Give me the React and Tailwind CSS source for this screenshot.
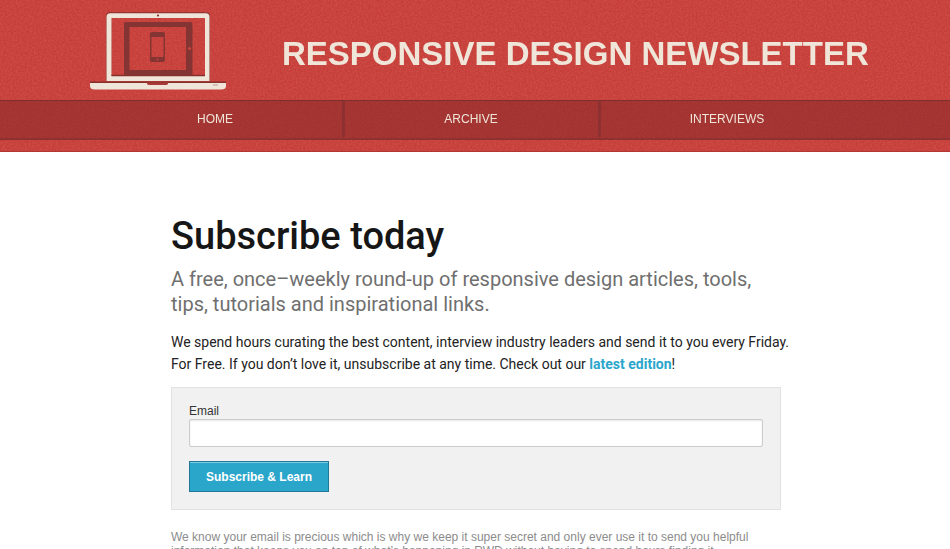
import React from "react";

const navItems = ["Home", "Archive", "Interviews"];

function Grain() {
  return (
    <svg className="pointer-events-none absolute inset-0 h-full w-full opacity-20 mix-blend-overlay" aria-hidden="true">
      <filter id="grain" colorInterpolationFilters="sRGB" x="0" y="0" width="100%" height="100%">
        <feTurbulence type="fractalNoise" baseFrequency="0.55" numOctaves="3" seed="4" />
        <feColorMatrix type="matrix" values="1 0 0 0 0  1 0 0 0 0  1 0 0 0 0  0 0 0 0 1" />
      </filter>
      <rect width="100%" height="100%" filter="url(#grain)" />
    </svg>
  );
}

function DeviceLogo() {
  return (
    <svg viewBox="0 0 136 78" className="h-[78px] w-[136px]" aria-hidden="true">
      <path fillRule="evenodd" d="M16 69V4.500Q16 .3 20.200 .3h95.600q4.200 0 4.200 4.200V69zM21.500 6v57.500h93.500V6z" fill="#85302d" />
      <path fillRule="evenodd" d="M16.500 69V5q0-3.700 3.700-3.700h95.600q3.700 0 3.700 3.700v64zM21.500 6v58h93.500V6z" fill="#efe5d8" />
      <path d="M21.500 62.800h93.500v1.400H21.500z" fill="#85302d" />
      <circle cx="68" cy="3.500" r="1.100" fill="#85302d" />
      <path fillRule="evenodd" d="M35.500 10h65.500q1.500 0 1.500 1.500V63H34V11.500Q34 10 35.500 10zM39.500 15v43H96V15z" fill="#833433" />
      <circle cx="99.500" cy="36.500" r="1.600" fill="#c9423f" />
      <path fillRule="evenodd" d="M62 20h11q2 0 2 2v26q0 2-2 2H62q-2 0-2-2V22q0-2 2-2zM61.500 25v20h12V25z" fill="#833433" />
      <circle cx="67.500" cy="47.500" r="1" fill="#c9423f" />
      <path d="M0 69.600h136v2H0z" fill="#85302d" />
      <path d="M0 71h57q0 2 3 2h15q3 0 3-2h58v3q0 3.500-5 3.500H5q-5 0-5-3.500z" fill="#efe5d8" />
      <path d="M57 70.500h21q0 2.500-3 2.500H60q-3 0-3-2.500z" fill="#a83a38" />
      <path d="M123 72.500h5v1h-5z" fill="#b59c90" />
    </svg>
  );
}

export default function App() {
  return (
    <div className="h-screen overflow-hidden bg-white font-['Roboto',sans-serif]">
      <header className="relative isolate border-b border-[#b23633] bg-[#c9433e] pb-[11px]">
        <Grain />
        <div className="relative flex items-start pl-[90px] pt-3">
          <DeviceLogo />
          <h1 className="ml-14 mt-5 h-[68px] whitespace-nowrap font-['Liberation_Sans',sans-serif] text-[33px] leading-[44px] font-bold text-[#efe5d8]">
            RESPONSIVE DESIGN NEWSLETTER
          </h1>
        </div>
        <nav className="relative border-t border-b-2 border-t-[#7f2e2b] border-b-[#8f322f] bg-[#8b2b2c]/60 pr-2">
          <ul className="mx-auto flex max-w-[765px] font-['Liberation_Sans',sans-serif] text-[12px] leading-9 text-[#efe5d8] uppercase">
            {navItems.map((item) => (
              <li key={item} className="mb-px flex-1 border-r-3 border-[#8c312f] text-center last:border-r-0">
                <a href="#" className="block">{item}</a>
              </li>
            ))}
          </ul>
        </nav>
      </header>

      <main className="mx-auto w-[612px] max-w-full pl-0.5 pt-[60px]">
        <h2 className="text-[38px] leading-[48px] font-medium text-[#161616]">Subscribe today</h2>
        <p className="mt-[7px] text-[20px] leading-[25px] text-[#6f6f6f]">
          A free, once–weekly round-up of responsive design articles, tools, tips, tutorials and inspirational links.
        </p>
        <p className="mt-3.5 text-[14px] leading-[22px] text-[#222] sm:whitespace-nowrap">
          We spend hours curating the best content, interview industry leaders and send it to you every Friday.
          <br />
          For Free. If you don’t love it, unsubscribe at any time. Check out our{" "}
          <a href="#" className="font-bold text-[#2ba6cb]">latest edition</a>!
        </p>

        <form className="mt-3 border border-[#e2e2e2] bg-[#f1f1f1] px-[17px] pt-4 pb-[17px] font-['Liberation_Sans',sans-serif]" onSubmit={(e) => e.preventDefault()}>
          <label htmlFor="email" className="block text-[12px] leading-[15px] text-[#333]">Email</label>
          <input id="email" type="email" className="block h-7 w-full rounded-xs border border-[#ccc] bg-white px-2 text-sm shadow-[inset_0_1px_2px_rgba(0,0,0,0.1)]" />
          <button type="submit" className="mt-3.5 block h-[31px] w-[140px] border border-[#1e7896] bg-[#2ba6cb] text-[12px] font-bold text-white shadow-[inset_0_1px_0_rgba(255,255,255,0.4)]">
            Subscribe &amp; Learn
          </button>
        </form>

        <p className="mt-5 font-['Liberation_Sans',sans-serif] text-[12px] leading-[14px] text-[#8c8c8c]">
          We know your email is precious which is why we keep it super secret and only ever use it to send you helpful
          <br />
          information that keeps you on top of what’s happening in RWD without having to spend hours finding it.
        </p>
      </main>
    </div>
  );
}
